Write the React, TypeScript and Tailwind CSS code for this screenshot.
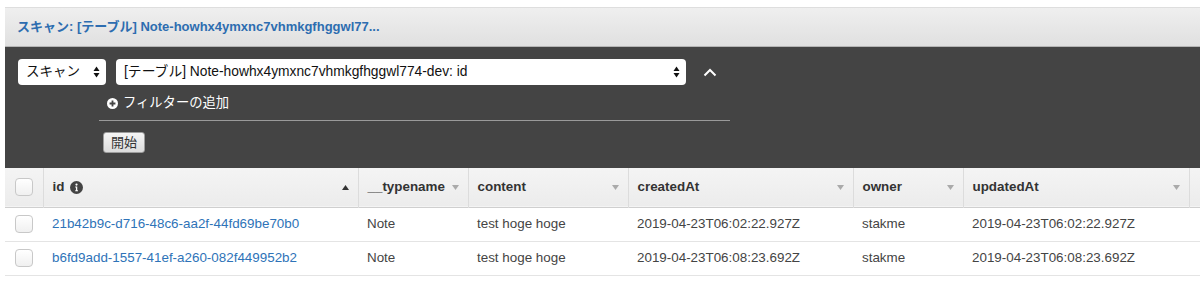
import { clsx } from 'clsx'

const font = { fontFamily: '"Liberation Sans", Arial, "Noto Sans CJK JP", sans-serif' }

interface Column {
  key: string
  label: string
  width: number
  sort: 'asc' | 'none'
  info?: boolean
}

const columns: Column[] = [
  { key: 'id', label: 'id', width: 315, sort: 'asc', info: true },
  { key: '__typename', label: '__typename', width: 110, sort: 'none' },
  { key: 'content', label: 'content', width: 160, sort: 'none' },
  { key: 'createdAt', label: 'createdAt', width: 225, sort: 'none' },
  { key: 'owner', label: 'owner', width: 110, sort: 'none' },
  { key: 'updatedAt', label: 'updatedAt', width: 226, sort: 'none' },
]

const rows = [
  {
    id: '21b42b9c-d716-48c6-aa2f-44fd69be70b0',
    __typename: 'Note',
    content: 'test hoge hoge',
    createdAt: '2019-04-23T06:02:22.927Z',
    owner: 'stakme',
    updatedAt: '2019-04-23T06:02:22.927Z',
  },
  {
    id: 'b6fd9add-1557-41ef-a260-082f449952b2',
    __typename: 'Note',
    content: 'test hoge hoge',
    createdAt: '2019-04-23T06:08:23.692Z',
    owner: 'stakme',
    updatedAt: '2019-04-23T06:08:23.692Z',
  },
]

function SelectArrows() {
  return (
    <svg width="7" height="12" viewBox="0 0 7 12" className="shrink-0">
      <path d="M3.5 0.5 L6.5 5 L0.5 5 Z" fill="#111" />
      <path d="M3.5 11.5 L6.5 7 L0.5 7 Z" fill="#111" />
    </svg>
  )
}

function Checkbox() {
  return (
    <div className="w-[18px] h-[18px] rounded-[4px] border border-[#c8c8c8] bg-gradient-to-b from-white to-[#f0f0f0]" />
  )
}

function InfoIcon() {
  return (
    <svg width="13" height="13" viewBox="0 0 14 14">
      <circle cx="7" cy="7" r="7" fill="#444" />
      <circle cx="7" cy="3.8" r="1.2" fill="#fff" />
      <path d="M5.6 6 H7.8 V10 H8.6 V11 H5.6 V10 H6.4 V7 H5.6 Z" fill="#fff" />
    </svg>
  )
}

function SortIcon({ dir }: { dir: 'asc' | 'none' }) {
  return dir === 'asc' ? (
    <svg width="7" height="5" viewBox="0 0 7 5">
      <path d="M3.5 0 L7 5 L0 5 Z" fill="#333" />
    </svg>
  ) : (
    <svg width="7" height="5" viewBox="0 0 7 5">
      <path d="M0 0 L7 0 L3.5 5 Z" fill="#aaa" />
    </svg>
  )
}

export default function App() {
  return (
    <div className="w-[1200px] h-[292px] bg-white pt-[7px] pl-[5px] overflow-hidden" style={font}>
      {/* title bar */}
      <div className="h-[40px] flex items-center pl-[12px] bg-gradient-to-b from-[#efefef] to-[#e0e0e0] border-t border-[#dedede] border-b border-b-[#b5b5b5]">
        <span className="text-[13px] font-bold text-[#2d6db0]">
          スキャン: [テーブル] Note-howhx4ymxnc7vhmkgfhggwl77...
        </span>
      </div>

      {/* query panel */}
      <div className="h-[121px] bg-[#444444] pl-[13px] pt-[12px]">
        <div className="flex items-center gap-[10px]">
          <div className="w-[88px] h-[26px] bg-white rounded-[4px] flex items-center justify-between pl-[8px] pr-[6px] text-[13.5px] text-[#111]">
            <span>スキャン</span>
            <SelectArrows />
          </div>
          <div className="w-[570px] h-[26px] bg-white rounded-[4px] flex items-center justify-between pl-[8px] pr-[6px] text-[13.8px] text-[#111]">
            <span>[テーブル] Note-howhx4ymxnc7vhmkgfhggwl774-dev: id</span>
            <SelectArrows />
          </div>
          <svg width="14" height="9" viewBox="0 0 14 9" className="ml-[7px]">
            <path d="M1.5 7.5 L7 2 L12.5 7.5" fill="none" stroke="#fff" strokeWidth="2" />
          </svg>
        </div>
        <div className="ml-[81px] w-[631px]">
          <div className="flex items-center gap-[5px] h-[35px] pl-[8px] pt-[1px] text-[13.3px] text-white">
            <svg width="11" height="11" viewBox="0 0 12 12">
              <circle cx="6" cy="6" r="6" fill="#fff" />
              <path d="M6 2.8 V9.2 M2.8 6 H9.2" stroke="#444" strokeWidth="2" />
            </svg>
            <span>フィルターの追加</span>
          </div>
          <div className="h-px bg-[#9a9a9a]" />
          <div className="pt-[9px] pl-[4px]">
            <div className="inline-flex items-center h-[21px] px-[7px] rounded-[3px] bg-gradient-to-b from-[#f5f5f5] to-[#dcdcdc] border border-[#9d9d9d] text-[13px] text-[#333]">
              開始
            </div>
          </div>
        </div>
      </div>

      {/* results table */}
      <table className="border-collapse text-[13.4px] table-fixed w-[1195px]">
        <colgroup>
          <col className="w-[38px]" />
          {columns.map(c => (
            <col key={c.key} style={{ width: c.width }} />
          ))}
          <col />
        </colgroup>
        <thead>
          <tr className="h-[39px] bg-gradient-to-b from-[#f4f4f4] to-[#ececec] border-b border-[#cfcfcf]">
            <th className="border-r border-[#dcdcdc] pl-[10px]">
              <Checkbox />
            </th>
            {columns.map(c => (
              <th key={c.key} className="border-r border-[#dcdcdc] px-[9px] text-left font-bold text-[#333]">
                <div className="flex items-center justify-between">
                  <span className="flex items-center gap-[6px]">
                    {c.label}
                    {c.info && <InfoIcon />}
                  </span>
                  <SortIcon dir={c.sort} />
                </div>
              </th>
            ))}
            <th />
          </tr>
        </thead>
        <tbody>
          {rows.map(row => (
            <tr key={row.id} className="h-[34px] border-b border-[#e4e4e4]">
              <td className="pl-[10px]">
                <Checkbox />
              </td>
              {columns.map(c => (
                <td
                  key={c.key}
                  className={clsx(
                    'px-[9px] whitespace-nowrap',
                    c.key === 'id' ? 'text-[#2e73b8]' : 'text-[#444]'
                  )}
                >
                  {row[c.key as keyof typeof row]}
                </td>
              ))}
              <td />
            </tr>
          ))}
        </tbody>
      </table>
    </div>
  )
}
